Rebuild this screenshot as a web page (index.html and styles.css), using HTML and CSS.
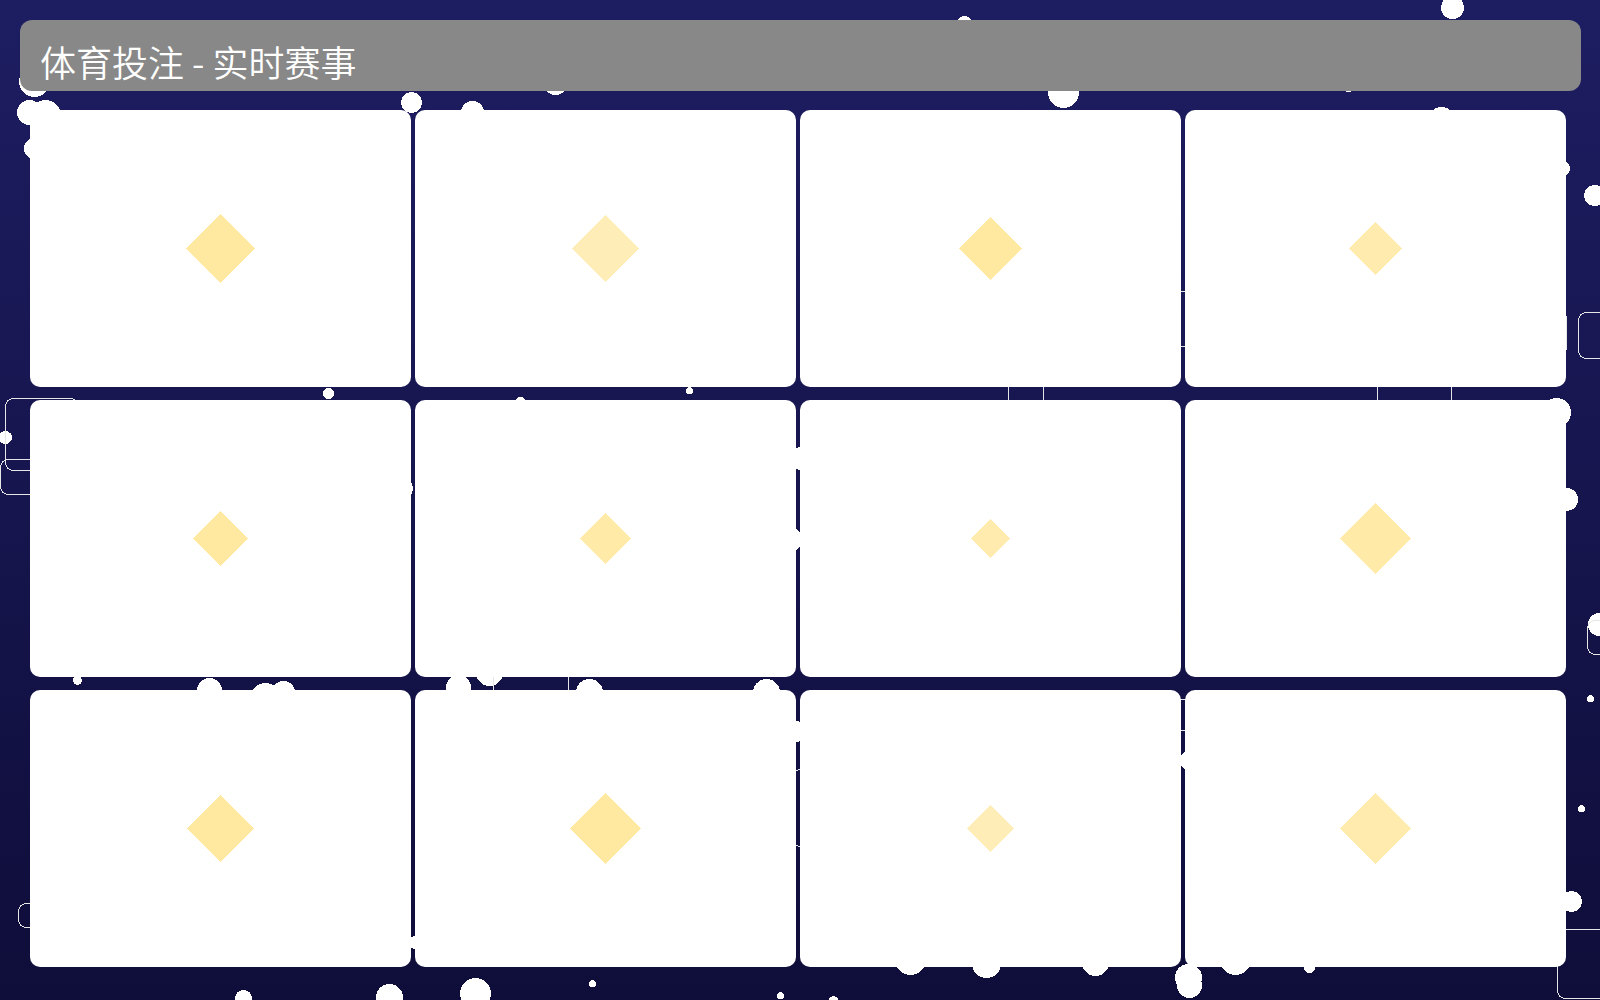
FILE: index.html
```html
<!DOCTYPE html>
<html lang="zh-CN">
<head>
    <meta charset="UTF-8">
    <meta name="viewport" content="width=device-width, initial-scale=1.0">
    <title>体育投注 - 实时赛事</title>

    <link rel="stylesheet" href="styles.css">

</head>
<body>
    <!-- Fondo: burbujas y marcos -->
    <svg class="backdrop" viewBox="0 0 1600 1000" preserveAspectRatio="xMidYMid slice" aria-hidden="true">
        <g class="bubbles">
            <circle cx="34.5" cy="81.5" r="15.5"/>
            <circle cx="29.5" cy="112.5" r="12.5"/>
            <circle cx="45.5" cy="115.5" r="15.5"/>
            <circle cx="34.5" cy="148.5" r="10.5"/>
            <circle cx="411.5" cy="102.5" r="10.5"/>
            <circle cx="472.5" cy="112.5" r="11.5"/>
            <circle cx="555.5" cy="83.5" r="11.5"/>
            <circle cx="964.5" cy="23.5" r="7.5"/>
            <circle cx="1063.5" cy="92.5" r="15.5"/>
            <circle cx="1452.5" cy="7.5" r="11.5"/>
            <circle cx="1348.5" cy="88.5" r="3.5"/>
            <circle cx="1441.5" cy="120.5" r="13.5"/>
            <circle cx="1562.5" cy="168.5" r="7.5"/>
            <circle cx="1594.5" cy="195.5" r="10.5"/>

            <circle cx="328.5" cy="393.5" r="5.5"/>
            <circle cx="520.5" cy="402.5" r="5.5"/>
            <circle cx="5.5" cy="437.5" r="6.5"/>
            <circle cx="402.5" cy="488.5" r="10.5"/>
            <circle cx="689.5" cy="390.5" r="3.5"/>
            <circle cx="801.5" cy="458.5" r="11.5"/>
            <circle cx="789.5" cy="539.5" r="12.5"/>
            <circle cx="1556.5" cy="412.5" r="14.5"/>
            <circle cx="1566.5" cy="499.5" r="11.5"/>
            <circle cx="1599.5" cy="624.5" r="11.5"/>

            <circle cx="77.5" cy="680.5" r="4.5"/>
            <circle cx="209.5" cy="690.5" r="12.5"/>
            <circle cx="265.5" cy="697.5" r="14.5"/>
            <circle cx="283.5" cy="692.5" r="11.5"/>
            <circle cx="458.5" cy="687.5" r="12.5"/>
            <circle cx="489.5" cy="672.5" r="13.5"/>
            <circle cx="589.5" cy="692.5" r="13.5"/>
            <circle cx="766.5" cy="692.5" r="13.5"/>
            <circle cx="796.5" cy="731.5" r="10.5"/>
            <circle cx="1190.5" cy="760.5" r="10.5"/>
            <circle cx="1590.5" cy="698.5" r="3.5"/>
            <circle cx="1581.5" cy="808.5" r="3.5"/>
            <circle cx="1571.5" cy="901.5" r="10.5"/>

            <circle cx="415.5" cy="942.5" r="6.5"/>
            <circle cx="243.5" cy="998.5" r="8.5"/>
            <circle cx="389.5" cy="997.5" r="13.5"/>
            <circle cx="475.5" cy="993.5" r="15.5"/>
            <circle cx="592.5" cy="983.5" r="3.5"/>
            <circle cx="780.5" cy="995.5" r="3.5"/>
            <circle cx="833.5" cy="1000.5" r="4.5"/>
            <circle cx="910.5" cy="959.5" r="15.5"/>
            <circle cx="986.5" cy="963.5" r="14.5"/>
            <circle cx="1095.5" cy="962.5" r="13.5"/>
            <circle cx="1188.5" cy="977.5" r="13.5"/>
            <circle cx="1189.5" cy="985.5" r="12.5"/>
            <circle cx="1235.5" cy="959.5" r="15.5"/>
            <circle cx="1309.5" cy="967.5" r="5.5"/>
        </g>
        <g class="frames">
            <rect x="5.5" y="398.5" width="73" height="72" rx="8"/>
            <rect x="0.5" y="459.5" width="60" height="35" rx="8"/>
            <rect x="18.5" y="903.5" width="50" height="24" rx="8"/>
            <rect x="1008.5" y="360.5" width="35" height="60" rx="8"/>
            <rect x="1150.5" y="291.5" width="60" height="55" rx="8"/>
            <rect x="1377.5" y="360.5" width="74" height="60" rx="8"/>
            <rect x="1510.5" y="310.5" width="56" height="45" rx="8"/>
            <rect x="1578.5" y="312.5" width="60" height="46" rx="8"/>
            <rect x="1587.5" y="620.5" width="60" height="34" rx="8"/>
            <rect x="493.5" y="640.5" width="75" height="70" rx="8"/>
            <rect x="792.5" y="769.5" width="70" height="77" rx="8"/>
            <rect x="1150.5" y="699.5" width="70" height="31" rx="8"/>
            <rect x="1557.5" y="929.5" width="70" height="69" rx="8"/>
        </g>
    </svg>

    <header class="header">
        <h1 class="title">体育投注 - 实时赛事</h1>
    </header>

    <main class="cards">
        <article class="card"><svg class="gem gold" width="69" height="69" viewBox="0 0 2 2"><path d="M1 0L2 1 1 2 0 1z"/></svg></article>
        <article class="card"><svg class="gem pale" width="67" height="67" viewBox="0 0 2 2"><path d="M1 0L2 1 1 2 0 1z"/></svg></article>
        <article class="card"><svg class="gem gold" width="63" height="63" viewBox="0 0 2 2"><path d="M1 0L2 1 1 2 0 1z"/></svg></article>
        <article class="card"><svg class="gem soft" width="53" height="53" viewBox="0 0 2 2"><path d="M1 0L2 1 1 2 0 1z"/></svg></article>

        <article class="card"><svg class="gem gold" width="55" height="55" viewBox="0 0 2 2"><path d="M1 0L2 1 1 2 0 1z"/></svg></article>
        <article class="card"><svg class="gem warm" width="51" height="51" viewBox="0 0 2 2"><path d="M1 0L2 1 1 2 0 1z"/></svg></article>
        <article class="card"><svg class="gem soft" width="39" height="39" viewBox="0 0 2 2"><path d="M1 0L2 1 1 2 0 1z"/></svg></article>
        <article class="card"><svg class="gem warm" width="71" height="71" viewBox="0 0 2 2"><path d="M1 0L2 1 1 2 0 1z"/></svg></article>

        <article class="card"><svg class="gem gold" width="67" height="67" viewBox="0 0 2 2"><path d="M1 0L2 1 1 2 0 1z"/></svg></article>
        <article class="card"><svg class="gem gold" width="71" height="71" viewBox="0 0 2 2"><path d="M1 0L2 1 1 2 0 1z"/></svg></article>
        <article class="card"><svg class="gem pale" width="47" height="47" viewBox="0 0 2 2"><path d="M1 0L2 1 1 2 0 1z"/></svg></article>
        <article class="card"><svg class="gem soft" width="71" height="71" viewBox="0 0 2 2"><path d="M1 0L2 1 1 2 0 1z"/></svg></article>
    </main>
</body>
</html>
```

FILE: styles.css
```css
html{
    box-sizing: border-box;
    font-family: "Noto Sans CJK SC", sans-serif;
    font-size: 16px;
}

*, *::after, *::before{
    box-sizing: inherit;
}

body{
    position: relative;
    display: flex;
    flex-direction: column;
    gap: 19px;
    min-height: 100vh;
    margin: 0;
    padding: 20px 0 32px;
    background: linear-gradient(#1d1d62, #0f0d39);
}

.backdrop{
    position: absolute;
    inset: 0;
    z-index: -1;
    width: 100%;
    height: 100%;
    shape-rendering: crispEdges;
}

.bubbles{
    fill: #fff;
}

.frames{
    fill: none;
    stroke: #e6e6e6;
}

.header{
    margin: 0 19px 0 20px;
    padding: 15px 20px 4px;
    border-radius: 12px;
    background-color: #888;
}

.title{
    margin: 0;
    color: #fff;
    font-size: 36px;
    font-weight: 350;
    line-height: 52px;
}

.cards{
    display: grid;
    grid-template-columns: repeat(4, 1fr);
    gap: 13px 4px;
    padding: 0 34px 0 30px;
}

.card{
    display: flex;
    justify-content: center;
    align-items: center;
    aspect-ratio: 381 / 277;
    border-radius: 10px;
    background-color: #fff;
}

.gem{
    shape-rendering: crispEdges;
}

.gold{
    fill: #ffe8a0;
}

.warm{
    fill: #ffeaa7;
}

.soft{
    fill: #ffebae;
}

.pale{
    fill: #ffedb8;
}
```
